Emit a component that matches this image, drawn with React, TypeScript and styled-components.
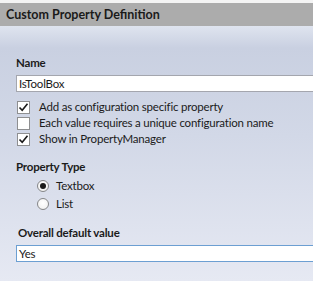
import React from "react";
import styled, { createGlobalStyle } from "styled-components";

const Global = createGlobalStyle`
  html, body { margin: 0; padding: 0; background: #f4f4f4; }
  body { font-family: Lato, "Noto Sans", sans-serif; color: #1b1b1b; }
`;

const Root = styled.div`
  width: 313px;
  height: 281px;
  overflow: hidden;
  display: flex;
  flex-direction: column;
  padding-top: 3px;
  box-sizing: border-box;
`;

const Header = styled.div`
  height: 23px;
  line-height: 23px;
  background: #acacac;
  padding-left: 6px;
  font-size: 12.5px;
  font-weight: 700;
  color: #1a1a1a;
  flex-shrink: 0;
`;

const Panel = styled.div`
  flex: 1;
  display: flex;
  flex-direction: column;
  padding-left: 16px;
  background: linear-gradient(
    180deg,
    #dfe4ef 0px,
    #c9d0e1 22px,
    #d2d8e7 110px,
    #e6e9f3 100%
  );
`;

const Label = styled.div<{ $top: number; $indent?: number }>`
  margin-top: ${(p) => p.$top}px;
  margin-left: ${(p) => p.$indent ?? 0}px;
  font-size: 11.5px;
  letter-spacing: -0.2px;
  font-weight: 700;
  line-height: 16px;
  height: 16px;
`;

const TextBox = styled.div<{ $top: number; $focused?: boolean }>`
  margin-top: ${(p) => p.$top}px;
  width: 320px;
  height: 17px;
  box-sizing: border-box;
  background: #fff;
  border: 1px solid ${(p) => (p.$focused ? "#6c9fd2" : "#a4a6ae")};
  padding-left: 2px;
  font-size: 11.5px;
  letter-spacing: -0.2px;
  line-height: 15px;
  white-space: nowrap;
`;

const OptionList = styled.div<{ $top: number; $indent: number }>`
  margin-top: ${(p) => p.$top}px;
  margin-left: ${(p) => p.$indent}px;
  display: flex;
  flex-direction: column;
`;

const OptionRow = styled.div<{ $h: number; $gap: number }>`
  height: ${(p) => p.$h}px;
  display: flex;
  align-items: center;
  gap: ${(p) => p.$gap}px;
  font-size: 11.5px;
  letter-spacing: -0.2px;
  line-height: 16px;
  white-space: nowrap;
`;

const Box = styled.span`
  width: 13px;
  height: 13px;
  box-sizing: border-box;
  border: 1px solid #8e8f91;
  background: #fff;
  display: flex;
  align-items: center;
  justify-content: center;
  flex-shrink: 0;
`;

const Radio = styled.span<{ $on?: boolean }>`
  width: 12px;
  height: 12px;
  box-sizing: border-box;
  border: 1px solid #858688;
  border-radius: 50%;
  background: radial-gradient(circle at 50% 40%, #ffffff 0%, #eeeeee 100%);
  display: flex;
  align-items: center;
  justify-content: center;
  flex-shrink: 0;
  &::after {
    content: "";
    width: 6px;
    height: 6px;
    border-radius: 50%;
    background: ${(p) => (p.$on ? "#1a1a1a" : "transparent")};
  }
`;

const Check = () => (
  <svg width="11" height="11" viewBox="0 0 11 11">
    <path d="M1.5 5.5 L4.2 8.3 L9.5 1.8" fill="none" stroke="#1a1a1a" strokeWidth="1.6" />
  </svg>
);

const CheckOption = ({ checked, label }: { checked: boolean; label: string }) => (
  <OptionRow $h={16} $gap={9}>
    <Box>{checked && <Check />}</Box>
    <span>{label}</span>
  </OptionRow>
);

const RadioOption = ({ on, label }: { on: boolean; label: string }) => (
  <OptionRow $h={18} $gap={7}>
    <Radio $on={on} />
    <span>{label}</span>
  </OptionRow>
);

export default function App() {
  return (
    <Root>
      <Global />
      <Header>Custom Property Definition</Header>
      <Panel>
        <Label $top={29}>Name</Label>
        <TextBox $top={4}>IsToolBox</TextBox>
        <OptionList $top={7} $indent={1}>
          <CheckOption checked label="Add as configuration specific property" />
          <CheckOption checked={false} label="Each value requires a unique configuration name" />
          <CheckOption checked label="Show in PropertyManager" />
        </OptionList>
        <Label $top={12}>Property Type</Label>
        <OptionList $top={2} $indent={21}>
          <RadioOption on label="Textbox" />
          <RadioOption on={false} label="List" />
        </OptionList>
        <Label $top={12} $indent={2}>Overall default value</Label>
        <TextBox $top={4} $focused>Yes</TextBox>
      </Panel>
    </Root>
  );
}
